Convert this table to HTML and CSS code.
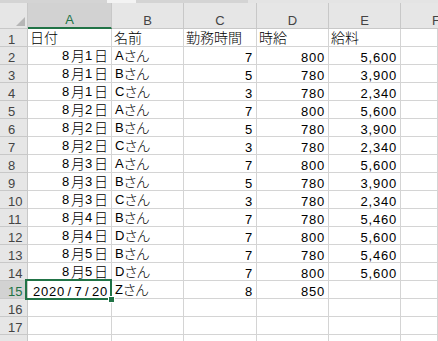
FILE: index.html
```html
<!DOCTYPE html>
<html lang="ja">
<head>
<meta charset="utf-8">
<title>Sheet</title>
<link rel="stylesheet" href="styles.css">
</head>
<body>
<div class="topbar"><div class="tb-a"></div><div class="tb-b"></div><div class="tb-c"></div><div class="tb-d"></div></div>
<div class="sheet">
  <div class="c h corner"><div class="tri"></div></div>
  <div class="c h col sel-col">A</div>
  <div class="c h col">B</div>
  <div class="c h col">C</div>
  <div class="c h col">D</div>
  <div class="c h col">E</div>
  <div class="c h col last">F</div>

  <div class="c h row">1</div>
  <div class="c">日付</div><div class="c">名前</div><div class="c">勤務時間</div><div class="c">時給</div><div class="c">給料</div><div class="c"></div>

  <div class="c h row">2</div>
  <div class="c r"><span class="d">8</span>月<span class="d">1</span>日</div><div class="c nm"><span class="l">A</span>さん</div><div class="c r num">7</div><div class="c r num">800</div><div class="c r num">5,600</div><div class="c"></div>

  <div class="c h row">3</div>
  <div class="c r"><span class="d">8</span>月<span class="d">1</span>日</div><div class="c nm"><span class="l">B</span>さん</div><div class="c r num">5</div><div class="c r num">780</div><div class="c r num">3,900</div><div class="c"></div>

  <div class="c h row">4</div>
  <div class="c r"><span class="d">8</span>月<span class="d">1</span>日</div><div class="c nm"><span class="l">C</span>さん</div><div class="c r num">3</div><div class="c r num">780</div><div class="c r num">2,340</div><div class="c"></div>

  <div class="c h row">5</div>
  <div class="c r"><span class="d">8</span>月<span class="d">2</span>日</div><div class="c nm"><span class="l">A</span>さん</div><div class="c r num">7</div><div class="c r num">800</div><div class="c r num">5,600</div><div class="c"></div>

  <div class="c h row">6</div>
  <div class="c r"><span class="d">8</span>月<span class="d">2</span>日</div><div class="c nm"><span class="l">B</span>さん</div><div class="c r num">5</div><div class="c r num">780</div><div class="c r num">3,900</div><div class="c"></div>

  <div class="c h row">7</div>
  <div class="c r"><span class="d">8</span>月<span class="d">2</span>日</div><div class="c nm"><span class="l">C</span>さん</div><div class="c r num">3</div><div class="c r num">780</div><div class="c r num">2,340</div><div class="c"></div>

  <div class="c h row">8</div>
  <div class="c r"><span class="d">8</span>月<span class="d">3</span>日</div><div class="c nm"><span class="l">A</span>さん</div><div class="c r num">7</div><div class="c r num">800</div><div class="c r num">5,600</div><div class="c"></div>

  <div class="c h row">9</div>
  <div class="c r"><span class="d">8</span>月<span class="d">3</span>日</div><div class="c nm"><span class="l">B</span>さん</div><div class="c r num">5</div><div class="c r num">780</div><div class="c r num">3,900</div><div class="c"></div>

  <div class="c h row">10</div>
  <div class="c r"><span class="d">8</span>月<span class="d">3</span>日</div><div class="c nm"><span class="l">C</span>さん</div><div class="c r num">3</div><div class="c r num">780</div><div class="c r num">2,340</div><div class="c"></div>

  <div class="c h row">11</div>
  <div class="c r"><span class="d">8</span>月<span class="d">4</span>日</div><div class="c nm"><span class="l">B</span>さん</div><div class="c r num">7</div><div class="c r num">780</div><div class="c r num">5,460</div><div class="c"></div>

  <div class="c h row">12</div>
  <div class="c r"><span class="d">8</span>月<span class="d">4</span>日</div><div class="c nm"><span class="l">D</span>さん</div><div class="c r num">7</div><div class="c r num">800</div><div class="c r num">5,600</div><div class="c"></div>

  <div class="c h row">13</div>
  <div class="c r"><span class="d">8</span>月<span class="d">5</span>日</div><div class="c nm"><span class="l">B</span>さん</div><div class="c r num">7</div><div class="c r num">780</div><div class="c r num">5,460</div><div class="c"></div>

  <div class="c h row">14</div>
  <div class="c r"><span class="d">8</span>月<span class="d">5</span>日</div><div class="c nm"><span class="l">D</span>さん</div><div class="c r num">7</div><div class="c r num">800</div><div class="c r num">5,600</div><div class="c"></div>

  <div class="c h row sel-row">15</div>
  <div class="c r num sel">2020<span class="sl">/</span>7<span class="sl">/</span>20</div><div class="c nm"><span class="l">Z</span>さん</div><div class="c r num">8</div><div class="c r num">850</div><div class="c"></div><div class="c"></div>

  <div class="c h row">16</div>
  <div class="c"></div><div class="c"></div><div class="c"></div><div class="c"></div><div class="c"></div><div class="c"></div>

  <div class="c h row">17</div>
  <div class="c"></div><div class="c"></div><div class="c"></div><div class="c"></div><div class="c"></div><div class="c"></div>

  <div class="c h row">18</div>
  <div class="c"></div><div class="c"></div><div class="c"></div><div class="c"></div><div class="c"></div><div class="c"></div>
</div>
</body>
</html>
```
FILE: styles.css
```css
html, body {
  margin: 0;
  padding: 0;
  overflow: hidden;
  background: #ffffff;
}
body {
  width: 438px;
  height: 341px;
  font-family: "Noto Sans CJK JP", sans-serif;
  font-size: 14px;
  font-weight: 300;
  color: #000;
}
.topbar {
  display: flex;
  height: 3px;
}
.tb-a { width: 107px; background: #d4d4d4; }
.tb-b { width: 29px; background: #f3f3f3; }
.tb-c { width: 112px; background: #d4d4d4; }
.tb-d { flex: 1; background: #e4e4e4; }

.sheet {
  display: grid;
  grid-template-columns: 28px 84px 72px 73px 72px 72px 37px;
  grid-template-rows: 26px repeat(18, 18px);
  width: 438px;
}
.c {
  box-sizing: border-box;
  border-right: 1px solid #d4d4d4;
  border-bottom: 1px solid #d4d4d4;
  display: flex;
  align-items: flex-end;
  line-height: 17px;
  padding: 0 2px;
  white-space: nowrap;
}
.r {
  justify-content: flex-end;
  padding-right: 3px;
}
.num {
  font-family: "Liberation Sans", sans-serif;
  font-size: 13px;
  font-weight: 400;
  letter-spacing: 0.8px;
  line-height: 13px;
  padding-right: 3px;
}
.d {
  font-family: "Liberation Sans", sans-serif;
  font-size: 13px;
  font-weight: 400;
  letter-spacing: 0.8px;
  margin-right: 1px;
}
.nm {
  font-feature-settings: "palt";
  padding-left: 3px;
}
.l {
  font-family: "Liberation Sans", sans-serif;
  font-size: 13px;
  font-weight: 400;
}
.sl {
  margin: 0 2.5px;
}
.h {
  background: #e6e6e6;
  border-right-color: #c8c8c8;
  border-bottom-color: #c8c8c8;
  color: #444;
  font-family: "Liberation Sans", sans-serif;
  font-size: 13px;
  font-weight: 400;
  line-height: 13px;
}
.col {
  justify-content: center;
  padding-bottom: 1px;
}
.last {
  justify-content: flex-start;
  padding-left: 31px;
  border-right: 0;
}
.row {
  padding: 0 0 0 8px;
}
.corner {
  justify-content: flex-end;
  padding: 0 2px 2px 0;
}
.tri {
  width: 0;
  height: 0;
  border-left: 9px solid transparent;
  border-bottom: 9px solid #b6b6b6;
}
.sel-col {
  background: #d2d2d2;
  color: #217346;
  border-bottom: 2px solid #217346;
}
.sel-row {
  background: #d2d2d2;
  color: #217346;
}
.sel {
  position: relative;
}
.sel::after {
  content: "";
  position: absolute;
  left: -3px;
  top: -2px;
  right: -1px;
  bottom: -2px;
  border: 2px solid #217346;
  z-index: 1;
}
.sel::before {
  content: "";
  position: absolute;
  right: -4px;
  bottom: -5px;
  width: 5px;
  height: 5px;
  background: #217346;
  border: 1px solid #ffffff;
  z-index: 2;
}
```
